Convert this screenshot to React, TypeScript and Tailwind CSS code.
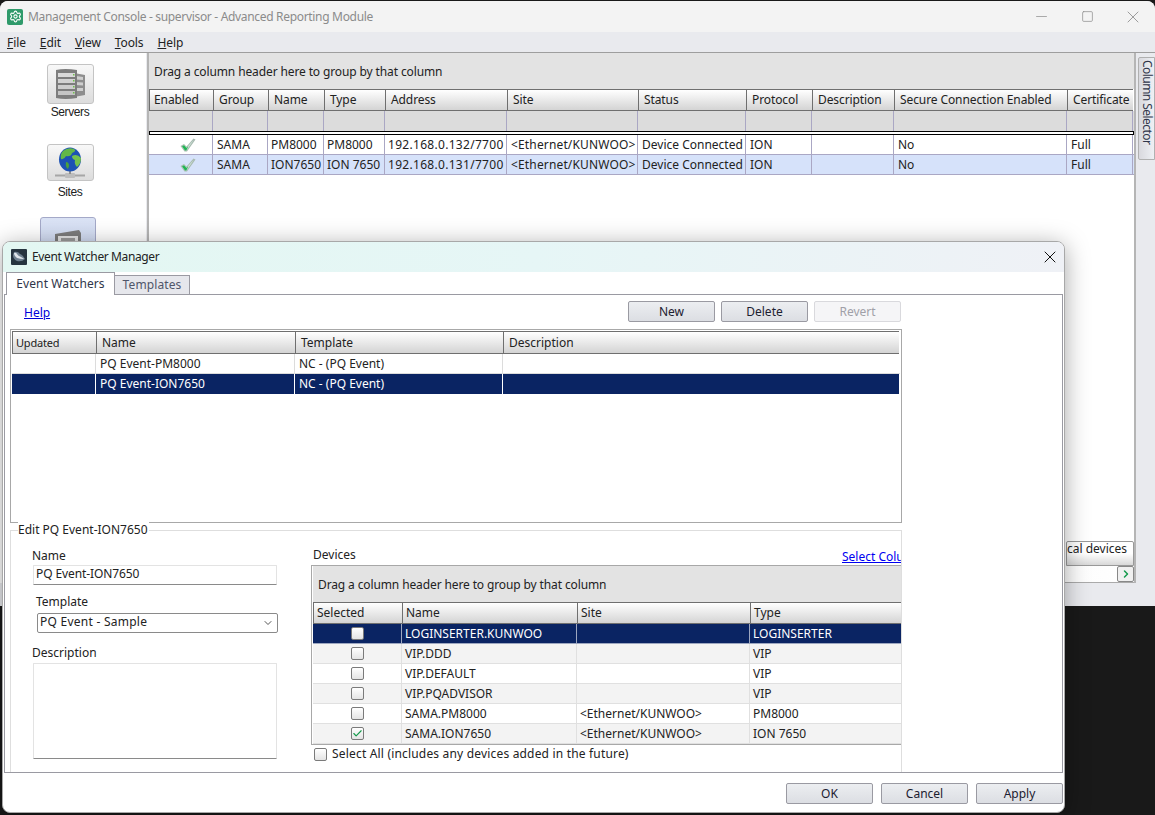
import { Settings, X, Minus, Square, ChevronDown, ChevronRight, Check } from 'lucide-react';

const mainCols = [
  { label: 'Enabled', w: 'w-[64px]' },
  { label: 'Group', w: 'w-[55px]' },
  { label: 'Name', w: 'w-[56px]' },
  { label: 'Type', w: 'w-[61px]' },
  { label: 'Address', w: 'w-[122px]' },
  { label: 'Site', w: 'w-[131px]' },
  { label: 'Status', w: 'w-[108px]' },
  { label: 'Protocol', w: 'w-[66px]' },
  { label: 'Description', w: 'w-[82px]' },
  { label: 'Secure Connection Enabled', w: 'w-[173px]' },
  { label: 'Certificate', w: 'w-[66px]' },
];

const mainRows = [
  ['', 'SAMA', 'PM8000', 'PM8000', '192.168.0.132/7700', '<Ethernet/KUNWOO>', 'Device Connected', 'ION', '', 'No', 'Full'],
  ['', 'SAMA', 'ION7650', 'ION 7650', '192.168.0.131/7700', '<Ethernet/KUNWOO>', 'Device Connected', 'ION', '', 'No', 'Full'],
];

const watcherCols = [
  { label: 'Updated', w: 'w-[84px]' },
  { label: 'Name', w: 'w-[199px]' },
  { label: 'Template', w: 'w-[208px]' },
  { label: 'Description', w: 'w-[396px]' },
];

const deviceCols = [
  { label: 'Selected', w: 'w-[89px]' },
  { label: 'Name', w: 'w-[175px]' },
  { label: 'Site', w: 'w-[173px]' },
  { label: 'Type', w: 'w-[152px]' },
];

const devices = [
  { name: 'LOGINSERTER.KUNWOO', site: '', type: 'LOGINSERTER', checked: false },
  { name: 'VIP.DDD', site: '', type: 'VIP', checked: false },
  { name: 'VIP.DEFAULT', site: '', type: 'VIP', checked: false },
  { name: 'VIP.PQADVISOR', site: '', type: 'VIP', checked: false },
  { name: 'SAMA.PM8000', site: '<Ethernet/KUNWOO>', type: 'PM8000', checked: false },
  { name: 'SAMA.ION7650', site: '<Ethernet/KUNWOO>', type: 'ION 7650', checked: true },
];

function HeaderCell({ label, w, h = 'h-[22px]', className = 'pl-[3px] leading-[20px]' }: { label: string; w: string; h?: string; className?: string }) {
  return (
    <div className={`${w} ${h} shrink-0 overflow-hidden whitespace-nowrap border-t border-l border-b border-[#6f6f6f] bg-linear-to-b from-white to-[#d4d4d4] text-[#222] ${className}`}>
      {label}
    </div>
  );
}

function GreenCheck() {
  return (
    <svg width="16" height="14" viewBox="0 0 16 14">
      <path d="M0.5 8 L4 6 L6.5 8.5 L13.5 0.5 L15.5 1.5 L7 13.5 L4.5 13.5 Z" fill="#a9bcb2" />
      <path d="M2 8.2 L4 7.2 L6.5 10 L14 1.6 L6.3 12.4 L5 12.4 Z" fill="#d9ece2" />
      <path d="M2 8.2 L4 7.2 L6.5 10 L8.5 8 L6.3 12.4 L5 12.4 Z" fill="#22b455" />
    </svg>
  );
}

function ServersIcon() {
  return (
    <svg width="32" height="32" viewBox="0 0 32 32">
      <path d="M20 5 L31 7 V27 L20 29 Z" fill="#8e8e8e" />
      <path d="M22 8 L29 9 V12 L22 11.5 Z M22 14 L29 14.5 V17.5 L22 17 Z M22 20 L29 20 V23 L22 23 Z" fill="#cfcfcf" />
      <path d="M2 2 Q11 0 23 2 V30 Q11 32 2 30 Z" fill="#7d7d7d" />
      <rect x="4" y="5" width="17" height="4" fill="#d9d9d9" />
      <rect x="4" y="11" width="17" height="4" fill="#d2d2d2" />
      <rect x="4" y="17" width="17" height="4" fill="#cdcdcd" />
      <rect x="4" y="23" width="17" height="4" fill="#c4c4c4" />
      <rect x="19" y="6" width="1.5" height="1.5" fill="#6fc04a" />
      <rect x="19" y="12" width="1.5" height="1.5" fill="#6fc04a" />
      <rect x="19" y="18" width="1.5" height="1.5" fill="#6fc04a" />
      <rect x="19" y="24" width="1.5" height="1.5" fill="#6fc04a" />
    </svg>
  );
}

function GlobeIcon() {
  return (
    <svg width="32" height="32" viewBox="0 0 32 32">
      <path d="M1 28.5 H31" stroke="#a6a6a6" strokeWidth="2" />
      <rect x="11" y="26" width="10" height="5" rx="1" fill="#bdbdbd" />
      <path d="M16 22 V27" stroke="#8f8f8f" strokeWidth="2" />
      <ellipse cx="16" cy="12.5" rx="11" ry="12" fill="#1d52b4" />
      <path d="M9 4 Q14 0 20 2 Q23 4 18 6 Q17 10 12 9 Q10 13 7 12 Q6 7 9 4 Z" fill="#62b848" />
      <path d="M18 9 Q23 6 27 11 Q27 17 23 20 Q20 17 21 13 Q18 12 18 9 Z" fill="#74c24e" />
      <path d="M12 15 Q15 15 15 19 L14 22 Q11 20 12 15 Z" fill="#4aa03c" />
    </svg>
  );
}

function DevicesIcon() {
  return (
    <svg width="30" height="12" viewBox="0 0 30 12">
      <path d="M2 4 L26 0 L28 3 V12 H2 Z" fill="#7c7c7c" />
      <path d="M5 6 H25 V12 H5 Z" fill="#e2e2e2" />
      <path d="M8 8 H22 V12 H8 Z" fill="#9a9a9a" />
    </svg>
  );
}

function ToolbarButton({ label, children, h, labelClass }: { label: string; children: React.ReactNode; h: string; labelClass: string }) {
  return (
    <div className="flex flex-col items-center">
      <div className={`flex ${h} w-[47px] items-center justify-center rounded-[3px] border border-[#c4c4c4] bg-linear-to-b from-[#f8f8f8] to-[#dcdcdc]`}>
        {children}
      </div>
      <span className={`font-['Liberation_Sans',sans-serif] text-[12px] leading-[14px] tracking-[-0.4px] text-[#222] ${labelClass}`}>{label}</span>
    </div>
  );
}

function MiniCheckbox({ checked }: { checked?: boolean }) {
  return (
    <div className="flex h-[13px] w-[13px] items-center justify-center rounded-[2px] border border-[#7a7a7a] bg-linear-to-b from-white to-[#e4e4e4]">
      {checked && <Check size={11} strokeWidth={2.5} className="text-[#159a4c]" />}
    </div>
  );
}

function DialogButton({ label, disabled }: { label: string; disabled?: boolean }) {
  return (
    <button className={`h-[21px] w-[87px] rounded-[2px] border text-center leading-[19px] ${disabled ? 'border-[#d9d9dd] bg-[#f5f5f7] text-[#a0a0a8]' : 'border-[#9a9aa2] bg-linear-to-b from-[#eceef1] to-[#dcdee3] text-[#1c2030]'}`}>
      {label}
    </button>
  );
}

function MainWindow() {
  return (
    <div className="absolute left-0 top-[1px] flex h-[605px] w-[1155px] flex-col overflow-hidden rounded-t-lg bg-[#e9eaee]">
      {/* title bar */}
      <div className="flex h-[31px] shrink-0 items-center bg-[#f3f3f3] pl-[7px]">
        <div className="flex h-[16px] w-[16px] items-center justify-center rounded-[2px] bg-[#2f9a6a]">
          <Settings size={13} className="text-white" />
        </div>
        <span className="ml-[5px] tracking-[-0.32px] text-[#8b8b8b]">Management Console - supervisor - Advanced Reporting Module</span>
        <div className="-mr-[1px] ml-auto flex items-center text-[#8a8a8a]">
          <div className="flex w-[46px] justify-center"><Minus size={17} strokeWidth={1} /></div>
          <div className="flex w-[46px] justify-center"><Square size={13} strokeWidth={1.3} /></div>
          <div className="flex w-[46px] justify-center"><X size={20} strokeWidth={1} /></div>
        </div>
      </div>
      {/* menu */}
      <div className="flex h-[20px] shrink-0 items-center gap-[14px] pl-[7px] pt-[2px] tracking-[-0.1px] text-[#222]">
        <span><u>F</u>ile</span>
        <span><u>E</u>dit</span>
        <span><u>V</u>iew</span>
        <span><u>T</u>ools</span>
        <span><u>H</u>elp</span>
      </div>
      <div className="flex h-[531px] shrink-0 border-t border-[#9e9e9e]">
        {/* left nav */}
        <div className="flex w-[146px] shrink-0 flex-col items-center bg-white pt-[11px]">
          <div className="-ml-[6px] flex flex-col items-center gap-[25px]">
            <ToolbarButton label="Servers" h="h-[40px]" labelClass="mt-[1px]"><ServersIcon /></ToolbarButton>
            <ToolbarButton label="Sites" h="h-[37px]" labelClass="mt-[4px]"><GlobeIcon /></ToolbarButton>
          </div>
          <div className="ml-[-10px] mt-[18px] flex h-[60px] w-[56px] justify-center rounded-[3px] border border-[#a4a9c8] bg-linear-to-b from-[#dbe3f5] to-[#c3d1ee] pt-[12px]">
            <DevicesIcon />
          </div>
        </div>
        {/* grid area */}
        <div className="ml-[1px] flex min-w-0 flex-1 flex-col border-x-2 border-[#b5b5b5] bg-white">
          <div className="flex h-[36px] shrink-0 items-center bg-[#e3e3e3] pl-[5px] pt-[1px] tracking-[-0.12px] text-[#222]">
            Drag a column header here to group by that column
          </div>
          <div className="flex tracking-[-0.1px]">
            {mainCols.map((c, i) => (
              <HeaderCell key={c.label} label={c.label} w={c.w} h="h-[22px]" className={i === 0 ? 'pl-[4px] leading-[20px]' : 'pl-[5px] leading-[20px]'} />
            ))}
          </div>
          <div className="flex h-[20px] bg-[#dcdcdc]">
            {mainCols.map(c => <div key={c.label} className={`${c.w} border-r border-[#aaa7c4]`} />)}
          </div>
          <div className="h-[4px] border border-black bg-white" />
          {mainRows.map((row, r) => (
            <div key={r} className={`flex h-[20px] border-b border-[#aaa7c4] ${r === 1 ? 'bg-[#d6e2fa]' : 'bg-white'}`}>
              {row.map((v, i) => (
                <div key={i} className={`${mainCols[i].w} flex shrink-0 items-center overflow-hidden whitespace-nowrap border-r border-[#aaa7c4] text-[#222] ${i === 0 ? 'pl-[31px]' : i >= 2 && i <= 4 ? 'pl-[3px]' : 'pl-[4px]'} ${i === 4 ? 'tracking-[0.3px]' : ''} ${i === 5 ? 'tracking-[0.15px]' : ''}`}>
                  {i === 0 ? <GreenCheck /> : v}
                </div>
              ))}
            </div>
          ))}
          <div className="flex-1" />
          <div className="flex h-[25px] justify-end">
            <div className="w-[68px] overflow-hidden whitespace-nowrap rounded-t-[2px] border border-[#999] bg-linear-to-b from-white via-white to-[#d8d8d8] pr-[6px] text-right leading-[14px] text-[#222]">cal devices</div>
          </div>
          <div className="flex h-[17px] items-center justify-end border-b border-[#aaa] bg-linear-to-r from-[#dddddd] to-white">
            <div className="flex h-[16px] w-[17px] items-center justify-center rounded-[2px] border border-[#888] bg-[#f0f0f0]">
              <ChevronRight size={12} strokeWidth={3} className="text-[#159a4c]" />
            </div>
          </div>
        </div>
        {/* column selector strip */}
        <div className="w-[19px] shrink-0 pl-[2px] pt-[4px]">
          <div className="flex h-[103px] w-[17px] items-center justify-start rounded-l-[2px] border border-[#b0b0b0] bg-linear-to-r from-[#d9d9de] to-[#eef0f4] pt-[2px] tracking-[-0.55px] text-[#30364a] [writing-mode:vertical-rl]">
            Column Selector
          </div>
        </div>
      </div>
    </div>
  );
}

function EventWatcherDialog() {
  return (
    <div className="absolute left-[2px] top-[241px] flex h-[572px] w-[1063px] flex-col overflow-hidden rounded-lg border border-[#a8a8a8] bg-white shadow-[0_4px_24px_rgba(0,0,0,0.35)]">
      {/* title */}
      <div className="flex h-[30px] shrink-0 items-center bg-linear-to-r from-[#e3f7f2] via-[#e6f6f6] to-[#eff1f6] pl-[8px] pr-[4px]">
        <svg width="16" height="16" viewBox="0 0 16 16">
          <rect width="16" height="16" rx="1" fill="#26343f" />
          <path d="M3 3 Q7 2 9 5 Q12 6 14 10 Q11 13 6 12 Q2 10 2 6 Z" fill="#6f8190" />
          <path d="M3 4 Q5 3 6 5 Q7 7 10 8 Q12 9 13 10 Q9 10 6 9 Q3 7 3 4 Z" fill="#dfe5ea" />
        </svg>
        <span className="ml-[5px] tracking-[-0.38px] text-[#222]">Event Watcher Manager</span>
        <X size={20} strokeWidth={1.2} className="ml-auto text-[#111]" />
      </div>
      {/* tabs */}
      <div className="z-10 -mb-[1px] flex h-[23px] shrink-0 items-end pl-[3px]">
        <div className="flex h-[23px] w-[109px] items-center justify-center border-x border-t border-[#9a9aa2] bg-white tracking-[0.1px] text-[#30364a]">Event Watchers</div>
        <div className="flex h-[20px] w-[75px] items-center justify-center border-y border-r border-[#9a9aa2] bg-[#e6e7ec] tracking-[0.1px] text-[#50566a]">Templates</div>
      </div>
      {/* panel */}
      <div className="mx-[1px] h-[479px] shrink-0 overflow-hidden border border-[#9a9aa2] bg-white">
        <div className="ml-[5px] w-[892px]">
          <div className="flex h-[34px] items-start pt-[6px]">
            <a className="ml-[14px] mt-[3px] text-[#0000d8] underline">Help</a>
            <div className="ml-auto mr-[1px] flex gap-[6px]">
              <DialogButton label="New" />
              <DialogButton label="Delete" />
              <DialogButton label="Revert" disabled />
            </div>
          </div>
          {/* watcher table */}
          <div className="h-[194px] border border-[#a8a8a8] p-[1px]">
            <div className="flex">
              {watcherCols.map(c => (
                <HeaderCell key={c.label} label={c.label} w={c.w} h="h-[23px]" className={c.label === 'Updated' ? 'pl-[3px] text-[11px] leading-[21px] tracking-[-0.2px]' : 'pl-[5px] leading-[21px]'} />
              ))}
            </div>
            <div className="flex h-[20px] border-b border-[#dcdcdc]">
              <div className="w-[84px] border-r border-[#dcdcdc]" />
              <div className="flex w-[199px] items-center border-r border-[#dcdcdc] pl-[4px] text-[#222]">PQ Event-PM8000</div>
              <div className="flex w-[208px] items-center border-r border-[#dcdcdc] pl-[4px] text-[#222]">NC - (PQ Event)</div>
            </div>
            <div className="flex h-[20px] w-[887px] bg-[#0a2463] text-white">
              <div className="w-[84px] border-r border-white" />
              <div className="flex w-[199px] items-center border-r border-white pl-[4px]">PQ Event-ION7650</div>
              <div className="flex w-[208px] items-center border-r border-white pl-[4px]">NC - (PQ Event)</div>
            </div>
          </div>
          {/* edit group */}
          <div className="relative mt-[7px] h-[243px] w-[892px] border-x border-t border-[#dedede]">
            <span className="absolute -top-[10px] left-[7px] bg-white pr-[1px] text-[#222]">Edit PQ Event-ION7650</span>
            <div className="flex h-full overflow-hidden">
              <div className="w-[300px] shrink-0 pl-[21px] pt-[17px]">
                <div className="h-[17px] leading-[16px] text-[#222]">Name</div>
                <div className="ml-[1px] h-[20px] w-[244px] rounded-[1px] border border-[#e3e3e3] border-b-[#8a8a8a] pl-[2px] leading-[15px] tracking-[-0.1px] text-[#222]">PQ Event-ION7650</div>
                <div className="ml-[4px] mt-[9px] h-[19px] leading-[16px] text-[#222]">Template</div>
                <div className="ml-[5px] flex h-[20px] w-[241px] items-center rounded-[2px] border border-[#8a8a8a] pb-[2px] pl-[2px] tracking-[0.25px] text-[#222]">
                  PQ Event - Sample
                  <ChevronDown size={12} className="ml-auto mr-[3px] mt-[2px] text-[#555]" />
                </div>
                <div className="mt-[12px] h-[18px] leading-[16px] text-[#222]">Description</div>
                <div className="ml-[1px] h-[96px] w-[244px] rounded-[1px] border border-[#e3e3e3] border-b-[#8a8a8a]" />
              </div>
              <div className="min-w-0 flex-1">
                <div className="-mr-[1px] flex h-[34px] items-start pl-[2px] pt-[16px] leading-[16px]">
                  <span className="text-[#222]">Devices</span>
                  <a className="ml-auto w-[60px] overflow-hidden whitespace-nowrap pt-[2px] text-[#0000f0] underline">Select Columns</a>
                </div>
                <div className="h-[180px] w-[620px] border border-[#a8a8a8] pl-[1px]">
                  <div className="flex h-[36px] items-center bg-[#e3e3e3] pl-[5px] pt-[1px] tracking-[-0.12px] text-[#222]">
                    Drag a column header here to group by that column
                  </div>
                  <div className="flex">
                    {deviceCols.map(c => <HeaderCell key={c.label} label={c.label} w={c.w} h="h-[22px]" />)}
                  </div>
                  {devices.map((d, i) => (
                    <div key={d.name} className={`flex h-[20px] ${i === 0 ? 'bg-[#0a2463] text-white' : i % 2 === 1 ? 'bg-[#f3f3f3] text-[#222]' : 'bg-white text-[#222]'}`}>
                      <div className={`flex w-[89px] shrink-0 items-center justify-center border-b border-r ${i === 0 ? 'border-white/60' : 'border-[#e0e0e0]'}`}>
                        <MiniCheckbox checked={d.checked} />
                      </div>
                      <div className={`flex w-[175px] shrink-0 items-center border-b border-r pl-[3px] ${i === 0 ? 'border-white/60' : 'border-[#e0e0e0]'}`}>{d.name}</div>
                      <div className={`flex w-[173px] shrink-0 items-center border-b border-r pl-[3px] ${i === 0 ? 'border-white/60' : 'border-[#e0e0e0]'}`}>{d.site}</div>
                      <div className={`flex w-[152px] shrink-0 items-center border-b pl-[3px] ${i === 0 ? 'border-white/60' : 'border-[#e0e0e0]'}`}>{d.type}</div>
                    </div>
                  ))}
                </div>
                <div className="ml-[3px] flex items-center gap-[5px] tracking-[0.18px] text-[#222]">
                  <MiniCheckbox />
                  Select All (includes any devices added in the future)
                </div>
              </div>
            </div>
          </div>
        </div>
      </div>
      {/* footer */}
      <div className="flex flex-1 items-start justify-end gap-[8px] pr-[1px] pt-[10px]">
        <DialogButton label="OK" />
        <DialogButton label="Cancel" />
        <DialogButton label="Apply" />
      </div>
    </div>
  );
}

export default function App() {
  return (
    <div className="relative h-[815px] w-[1155px] overflow-hidden bg-[#191919] font-['Noto_Sans','Liberation_Sans',sans-serif] text-[12px]">
      <MainWindow />
      <EventWatcherDialog />
    </div>
  );
}
